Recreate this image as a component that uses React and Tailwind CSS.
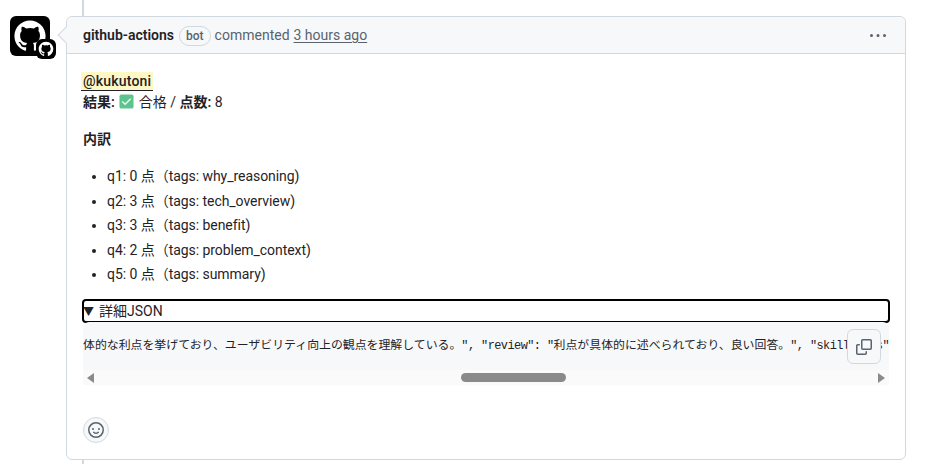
import React from "react";

const jp = "font-['Roboto','Noto_Sans_CJK_JP',sans-serif]";

const items = [
  "q1: 0 点（tags: why_reasoning)",
  "q2: 3 点（tags: tech_overview)",
  "q3: 3 点（tags: benefit)",
  "q4: 2 点（tags: problem_context)",
  "q5: 0 点（tags: summary)",
];

const MARK =
  "M12 1C5.923 1 1 5.923 1 12c0 4.867 3.149 8.979 7.521 10.436.55.096.756-.233.756-.522 0-.262-.013-1.128-.013-2.049-2.764.509-3.479-.674-3.699-1.292-.124-.317-.66-1.293-1.127-1.554-.385-.207-.936-.715-.014-.729.866-.014 1.485.797 1.691 1.128.99 1.663 2.571 1.196 3.204.907.096-.715.385-1.196.701-1.471-2.448-.275-5.005-1.224-5.005-5.432 0-1.196.426-2.186 1.128-2.956-.11-.275-.495-1.402.11-2.915 0 0 .921-.288 3.024 1.128a10.193 10.193 0 0 1 2.75-.371c.936 0 1.871.123 2.75.371 2.104-1.43 3.025-1.128 3.025-1.128.605 1.513.221 2.64.111 2.915.701.77 1.127 1.747 1.127 2.956 0 4.222-2.571 5.157-5.019 5.432.399.344.743 1.004.743 2.035 0 1.471-.014 2.654-.014 3.025 0 .289.206.632.756.522C19.851 20.979 23 16.854 23 12c0-6.077-4.922-11-11-11Z";

function Avatar() {
  return (
    <div className="relative w-10 h-10 shrink-0 rounded-md bg-black flex items-center justify-center">
      <svg viewBox="0 0 24 24" className="w-[34px] h-[34px]" fill="#fff">
        <path d={MARK} />
      </svg>
      <div className="absolute -right-[6px] -bottom-[3px] w-5 h-5 rounded-md bg-black flex items-center justify-center">
        <svg viewBox="0 0 24 24" className="w-4 h-4" fill="#fff">
          <path d={MARK} />
        </svg>
      </div>
    </div>
  );
}

function CheckEmoji() {
  return (
    <svg viewBox="0 0 16 16" className="inline-block w-[15px] h-[15px] align-[-2px] mx-[1px]">
      <rect x="0.500" y="0.500" width="15" height="15" rx="2" fill="#5cc58f" />
      <path d="M3.500 8l3 3 6-6" fill="none" stroke="#eef6ef" strokeWidth="1.500" />
    </svg>
  );
}

function Header() {
  return (
    <div className="relative flex items-center h-[37px] px-4 pt-[1px] bg-[#f6f8fa] border-b border-[#d1d9e0] rounded-t-md text-[14px] text-[#59636e]">
      <div className="absolute -left-[7px] top-[12px] w-3 h-3 rotate-45 bg-[#f6f8fa] border-l border-b border-[#d1d9e0]" />
      <span className="font-semibold text-[#1f2328]">github-actions</span>
      <span className="ml-[5px] px-[6px] h-5 leading-[18px] border border-[#d1d9e0] rounded-full text-[12px] font-medium">bot</span>
      <span className="ml-1">commented</span>
      <span className="ml-1 underline underline-offset-2">3 hours ago</span>
      <svg viewBox="0 0 16 16" className="w-4 h-4 ml-auto mr-[3px]" fill="#59636e">
        <path d="M8 9a1.500 1.500 0 1 0 0-3 1.500 1.500 0 0 0 0 3ZM1.500 9a1.500 1.500 0 1 0 0-3 1.500 1.500 0 0 0 0 3Zm13 0a1.500 1.500 0 1 0 0-3 1.500 1.500 0 0 0 0 3Z" />
      </svg>
    </div>
  );
}

function CodeBlock() {
  return (
    <div className="relative bg-[#f6f8fa] rounded-md">
      <pre className="h-12 pt-[14px] overflow-hidden whitespace-pre font-['Liberation_Mono','Noto_Sans_CJK_JP',monospace] text-[11.9px] leading-[20px] text-[#1f2328]">
        体的な利点を挙げており、ユーザビリティ向上の観点を理解している。<span className="tracking-[-0.55px]">", "review": "</span>利点が具体的に述べられており、良い回答。<span className="tracking-[-0.55px]">", "skill_tags"</span>
      </pre>
      <div className="flex items-center h-[15px] bg-[#fafafa] px-[4px]">
        <div className="w-0 h-0 border-y-[5px] border-y-transparent border-r-[7px] border-r-[#8a8a8a]" />
        <div className="ml-[367px] w-[105px] h-[9px] rounded-full bg-[#8a8a8a]" />
        <div className="ml-auto w-0 h-0 border-y-[5px] border-y-transparent border-l-[7px] border-l-[#8a8a8a]" />
      </div>
      <button className="absolute right-2 top-[7px] w-[34px] h-[35px] flex items-center justify-center bg-[#f6f8fa] border border-[#d1d9e0] rounded-md">
        <svg viewBox="0 0 16 16" className="w-4 h-4" fill="#59636e">
          <path d="M0 6.750C0 5.784.784 5 1.750 5h1.500a.75.75 0 0 1 0 1.500h-1.500a.25.25 0 0 0-.25.25v7.500c0 .138.112.25.25.25h7.500a.25.25 0 0 0 .25-.25v-1.500a.75.75 0 0 1 1.500 0v1.500A1.750 1.750 0 0 1 9.250 16h-7.500A1.750 1.750 0 0 1 0 14.250Z" />
          <path d="M5 1.750C5 .784 5.784 0 6.750 0h7.500C15.216 0 16 .784 16 1.750v7.500A1.750 1.750 0 0 1 14.250 11h-7.500A1.750 1.750 0 0 1 5 9.250Zm1.750-.25a.25.25 0 0 0-.25.25v7.500c0 .138.112.25.25.25h7.500a.25.25 0 0 0 .25-.25v-7.500a.25.25 0 0 0-.25-.25Z" />
        </svg>
      </button>
    </div>
  );
}

export default function App() {
  return (
    <div className={`relative w-[946px] h-[464px] bg-white overflow-hidden ${jp}`}>
      <div className="absolute left-[82px] top-0 bottom-0 w-[2px] bg-[#d1d9e0]" />
      <div className="relative flex pt-4 pl-[10px]">
        <Avatar />
        <div className="ml-4 w-[840px] h-[444px] bg-white border border-[#d1d9e0] rounded-md">
          <Header />
          <div className="px-4 pt-[17px] text-[14px] leading-[21px] text-[#1f2328]">
            <div className="h-[21px]">
              <span className="inline-block h-[19px] leading-[19px] -mx-[2px] px-[2px] bg-[#fff8c5] border-b border-[#1f2328] font-medium tracking-[0.2px]">@kukutoni</span>
            </div>
            <div>
              <b className="font-semibold">結果:</b> <CheckEmoji /> 合格 / <b className="font-semibold">点数:</b> 8
            </div>
            <p className="mt-4 font-semibold">内訳</p>
            <ul className="mt-4 pl-6 list-disc tracking-[-0.05px]">
              {items.map((item) => (
                <li key={item} className="mb-[3.500px]">{item}</li>
              ))}
            </ul>
            <div className="mt-[15px] h-[22px] outline-2 -outline-offset-1 outline-black rounded-[3px] leading-[22px]">
              <span className="text-[11px] mr-[5px]">▼</span>詳細JSON
            </div>
            <CodeBlock />
            <button className="mt-8 w-[26px] h-[26px] flex items-center justify-center rounded-full bg-[#f6f8fa] border border-[#d1d9e0]">
              <svg viewBox="0 0 16 16" className="w-4 h-4" fill="#59636e">
                <path d="M8 0a8 8 0 1 1 0 16A8 8 0 0 1 8 0ZM1.500 8a6.500 6.500 0 1 0 13 0 6.500 6.500 0 0 0-13 0Zm3.820 1.636a.75.75 0 0 1 1.038.175l.007.009c.103.118.22.222.35.31.264.178.683.37 1.285.37.602 0 1.020-.192 1.285-.371.13-.088.247-.192.35-.31l.007-.008a.75.75 0 0 1 1.222.87c-.16.23-.34.44-.72.66-.63.418-1.370.638-2.127.629-.946 0-1.652-.308-2.126-.63a3.331 3.331 0 0 1-.715-.657.75.75 0 0 1 .183-1.044ZM12 7a1 1 0 1 1-2 0 1 1 0 0 1 2 0ZM5 8a1 1 0 1 1 0-2 1 1 0 0 1 0 2Z" />
              </svg>
            </button>
          </div>
        </div>
      </div>
    </div>
  );
}
